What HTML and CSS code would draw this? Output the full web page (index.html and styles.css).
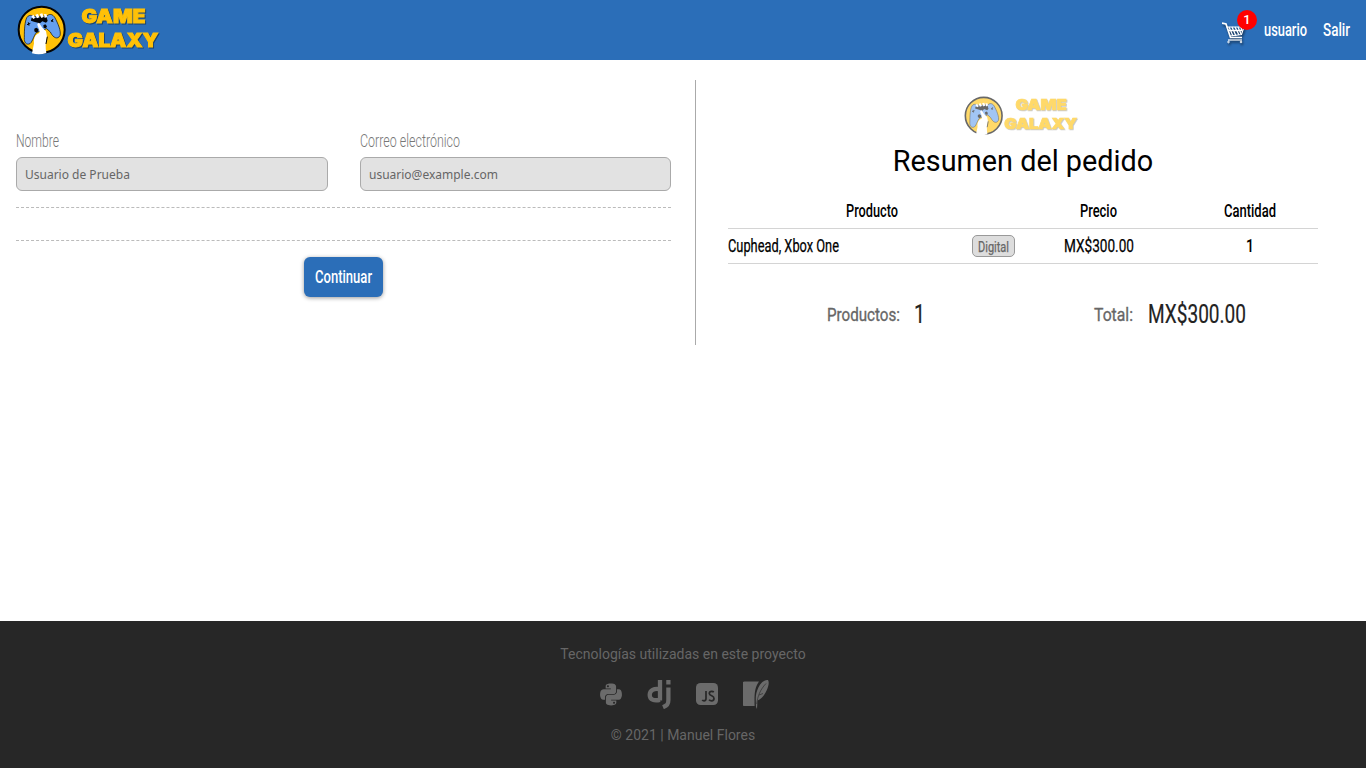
FILE: index.html
```html
<!DOCTYPE html>
<html lang="es">
<head>
<meta charset="utf-8">
<title>Game Galaxy</title>
<link rel="stylesheet" href="styles.css">
</head>
<body>
<svg class="defs">
  <symbol id="logo" viewBox="17 5 144 50" overflow="visible">
    <g transform="translate(12 2) scale(.33333)">
      <circle cx="89" cy="83" r="69" fill="#ffc107" stroke="#050505" stroke-width="6"/>
      <path d="M45 46C54 34 64 44 74 44L106 41C114 34 123 38 128 46C138 64 148 88 144 101C137 113 124 109 115 90L104 80L78 90C67 91 63 119 54 125C42 130 36 121 37 107C37 84 38 58 45 46Z" fill="#659fee" stroke="#050505" stroke-width="2"/>
      <path d="M58 49L103 43L107 57L102 62L91 58L84 64L66 59L57 56Z" fill="#050505"/>
      <path d="M58 42l7-4 4 10-5 3zM70 38l8-2 4 10-7 3zM83 36l8-2 4 11-7 3zM96 36l8 1 1 8-7 3z" fill="#fff"/>
      <path d="M60 154L66 124C64 108 70 98 82 93C85 83 76 75 76 66L81 62L91 77L102 88L105 104C100 121 100 137 103 153Q82 160 60 154Z" fill="#fff"/>
      <path d="M67 80l6-3 6 4v7l-6 4-6-4zM94 70l6-3 5 6-3 6-7-1z" fill="#050505"/>
      <path d="M45 68l10-4M49 61l2 10M117 55l7 4M123 51l-4 9M106 104l-4 22" fill="none" stroke="#050505" stroke-width="3"/>
    </g>
    <g class="brand">
      <text x="81.5" y="23" textLength="64" lengthAdjust="spacingAndGlyphs">GAME</text>
      <text x="67.5" y="46.500" textLength="91" lengthAdjust="spacingAndGlyphs">GALAXY</text>
    </g>
  </symbol>
</svg>

<header class="navbar">
  <svg class="logo"><use href="#logo"/></svg>
  <nav class="nav">
    <span class="cart">
      <svg width="24" height="24" viewBox="0 0 24 24" fill="none" stroke="#fff">
        <path d="M0 2L4 3L8.500 16.500H20" stroke-width="1.700"/>
        <path d="M4.500 6H22L19.500 13.500L8 15" stroke-width="1.100"/>
        <path d="M7 6l4 9M10 6l4 9M13 6l4 8M16 6l3 7M19 6l1 4M6 9.500H20" stroke-width="1.300"/>
        <path d="M6 19H20" stroke-width="1.200"/>
        <circle cx="6.500" cy="21" r=".8"/><circle cx="19" cy="21" r=".8"/>
      </svg>
      <b class="badge">1</b>
    </span>
    <svg class="t medium white" width="43"><text y="18" textLength="43" lengthAdjust="spacingAndGlyphs">usuario</text></svg>
    <svg class="t medium white" width="27"><text y="18" textLength="27" lengthAdjust="spacingAndGlyphs">Salir</text></svg>
  </nav>
</header>

<main class="checkout">
  <form class="details">
    <div class="fields">
      <label class="field">
        <svg class="t light" width="43"><text y="17.500" textLength="43" lengthAdjust="spacingAndGlyphs">Nombre</text></svg>
        <input class="input" value="Usuario de Prueba" disabled>
      </label>
      <label class="field">
        <svg class="t light" width="100"><text y="17.500" textLength="100" lengthAdjust="spacingAndGlyphs">Correo electrónico</text></svg>
        <input class="input" value="usuario@example.com" disabled>
      </label>
    </div>
    <div class="rules"></div>
    <button class="submit" type="button">
      <svg class="t medium white" width="57"><text y="18" textLength="57" lengthAdjust="spacingAndGlyphs">Continuar</text></svg>
    </button>
  </form>

  <section class="summary">
    <svg class="logo-small"><use href="#logo"/></svg>
    <h1 class="title">Resumen del pedido</h1>
    <div class="row head">
      <div class="center"><svg class="t medium" width="52"><text y="18" textLength="52" lengthAdjust="spacingAndGlyphs">Producto</text></svg></div>
      <div class="center"><svg class="t medium" width="37"><text y="18" textLength="37" lengthAdjust="spacingAndGlyphs">Precio</text></svg></div>
      <div class="center"><svg class="t medium" width="52"><text y="18" textLength="52" lengthAdjust="spacingAndGlyphs">Cantidad</text></svg></div>
    </div>
    <div class="row">
      <div class="product">
        <svg class="t regular" width="111"><text y="18" textLength="111" lengthAdjust="spacingAndGlyphs">Cuphead, Xbox One</text></svg>
        <span class="tag"><svg class="t small" width="31"><text y="15.500" textLength="31" lengthAdjust="spacingAndGlyphs">Digital</text></svg></span>
      </div>
      <div class="center"><svg class="t regular" width="70"><text y="18" textLength="70" lengthAdjust="spacingAndGlyphs">MX$300.00</text></svg></div>
      <div class="center"><svg class="t medium" width="6"><text x="-1" y="18" textLength="8" lengthAdjust="spacingAndGlyphs">1</text></svg></div>
    </div>
    <div class="totals">
      <div class="total">
        <svg class="t caption" width="73"><text y="19" textLength="73" lengthAdjust="spacingAndGlyphs">Productos:</text></svg>
        <svg class="t amount" width="8"><text x="-1" y="21" textLength="11" lengthAdjust="spacingAndGlyphs">1</text></svg>
      </div>
      <div class="total">
        <svg class="t caption" width="39"><text y="19" textLength="39" lengthAdjust="spacingAndGlyphs">Total:</text></svg>
        <svg class="t amount" width="98"><text y="21" textLength="98" lengthAdjust="spacingAndGlyphs">MX$300.00</text></svg>
      </div>
    </div>
  </section>
</main>

<footer class="footer">
  <p class="note">Tecnologías utilizadas en este proyecto</p>
  <div class="techs">
    <svg width="22" height="25" viewBox="0 0 448 512"><path d="M439.800 200.500c-7.700-30.900-22.300-54.200-53.400-54.200h-40.100v47.400c0 36.800-31.200 67.800-66.800 67.800H172.700c-29.200 0-53.400 25-53.400 54.300v101.800c0 29 25.200 46 53.400 54.300 33.800 9.900 66.300 11.700 106.800 0 26.900-7.800 53.400-23.500 53.400-54.300v-40.700H226.200v-13.600h160.200c31.100 0 42.600-21.700 53.400-54.200 11.200-33.500 10.700-65.700 0-108.600zM286.200 404c11.100 0 20.100 9.100 20.100 20.300 0 11.300-9 20.400-20.100 20.400-11 0-20.100-9.200-20.100-20.400.1-11.300 9.100-20.300 20.100-20.300zM167.800 248.100h106.800c29.700 0 53.400-24.500 53.400-54.300V91.900c0-29-24.400-50.700-53.400-55.600-35.800-5.900-74.700-5.600-106.800.1-45.200 8-53.400 24.700-53.400 55.600v40.700h106.900v13.600h-147c-31.100 0-58.300 18.700-66.800 54.200-9.800 40.700-10.200 66.100 0 108.600 7.600 31.600 25.700 54.200 56.800 54.200H101v-48.800c0-35.300 30.500-66.400 66.800-66.400zm-6.700-142.600c-11.100 0-20.100-9.100-20.100-20.300.1-11.300 9-20.400 20.100-20.400 11 0 20.100 9.200 20.100 20.400s-9 20.300-20.100 20.300z"/></svg>
    <svg width="24" height="30" viewBox="-.5 -1 24 30" fill="none">
      <path d="M12.500 0V20.500M12.500 9.300C6.500 8 2.200 10.500 2.200 15C2.200 20 7 21 12.500 19.800" stroke-width="4.300"/>
      <path d="M20.900 7.500V20C20.900 24.500 19.500 25.500 15.500 27.200M20.900 0V4.500" stroke-width="4.300"/>
    </svg>
    <svg width="22" height="22" viewBox="0 0 22 22"><rect width="22" height="22" rx="4.500"/><path d="M10 8V15.500Q10 17.800 8 17.800Q6.800 17.800 6.200 17M17.800 9Q17 8.300 15.800 8.300Q13.300 8.300 13.300 10.500Q13.300 12 15.700 12.800Q18 13.700 18 15.500Q18 17.800 15.700 17.800Q13.900 17.800 13 16.800" class="cut" stroke-width="1.700"/></svg>
    <svg width="27" height="30" viewBox="1 -1 27 30"><path d="M2.500 1.500H17C12.500 7.500 12.300 15 12.600 26H2.500Q.5 26 .5 24V3.500Q.5 1.500 2.500 1.500Z"/><path d="M26 0C22-1 17 4.500 15 11C13.300 16 13.800 19.500 14 27L15 29L15.500 20.500C22 19 29 4 26 0Z"/><path d="M24 3.500C18 10 15.700 16 14.700 24M17 15l4-1.500" class="cut" stroke-width=".6"/></svg>
  </div>
  <p class="note">© 2021 | Manuel Flores</p>
</footer>
</body>
</html>
```

FILE: styles.css
```css
* { box-sizing: border-box; }
body {
  margin: 0;
  min-height: 768px;
  display: flex;
  flex-direction: column;
  background: #fff;
  font-family: Roboto, sans-serif;
}
svg { display: block; flex: none; }
.defs { position: absolute; width: 0; height: 0; }

.brand {
  font: 900 18.5px Inter, sans-serif;
  fill: #ffc107;
  stroke: #ffc107;
  stroke-width: .9px;
  filter: drop-shadow(1px 1px .5px rgba(0, 0, 0, .4));
}

/* Condensed lettering */
.t { height: 24px; overflow: visible; font: 400 18px Roboto, sans-serif; fill: #000; }
.medium { font-weight: 500; }
.regular { stroke: #000; stroke-width: .25px; }
.white { fill: #fff; }
.light { font-weight: 300; fill: #777; }
.small { height: 20px; font-size: 14.5px; fill: #666; stroke: #666; stroke-width: .25px; }
.caption { font-size: 19px; fill: #666; stroke: #666; stroke-width: .35px; }
.amount { font-size: 26px; fill: #222; stroke: #222; stroke-width: .2px; }

.navbar {
  height: 60px;
  padding: 0 16px 0 17px;
  display: flex;
  align-items: center;
  justify-content: space-between;
  background: #2b6eb8;
}
.logo { width: 144px; height: 50px; overflow: visible; }
.nav { display: flex; align-items: center; gap: 16px; }
.cart { position: relative; margin: 6px 2px 0 0; }
.cart svg { filter: drop-shadow(1px 2px 1px rgba(0, 0, 0, .6)); }
.badge {
  position: absolute;
  top: -11px;
  left: 15px;
  width: 20px;
  height: 20px;
  border-radius: 50%;
  background: #f00;
  color: #fff;
  font: 500 13px/20px Roboto, sans-serif;
  text-align: center;
}

.checkout { flex: 1; display: flex; align-items: flex-start; padding-top: 20px; }
.details { width: 696px; height: 265px; padding: 49px 24px 0 16px; border-right: 1px solid #aaa; }
.fields { display: grid; grid-template-columns: 312px 311px; column-gap: 32px; }
.field { display: grid; gap: 4px; }
.input {
  width: 100%;
  height: 34px;
  padding: 0 8px;
  border: 1px solid #aaa;
  border-radius: 6px;
  background: #e2e2e2;
  color: #666;
  font: 12px "Noto Sans", sans-serif;
}
.rules { height: 34px; margin-top: 16px; border: dashed #bbb; border-width: 1px 0; }
.submit {
  display: flex;
  align-items: center;
  justify-content: center;
  width: 79px;
  height: 40px;
  margin: 16px auto 0;
  padding: 0;
  border: 0;
  border-radius: 6px;
  background: #2b6eb8;
  box-shadow: 0 1px 4px rgba(0, 0, 0, .4);
}

.summary { width: 590px; margin-left: 32px; padding-top: 16px; }
.logo-small { width: 115px; height: 40px; margin: 0 auto 0 236px; opacity: .6; overflow: visible; }
.title { margin: 7px 0 15px; font-size: 28.8px; line-height: 36px; font-weight: 400; text-align: center; }
.row {
  height: 35px;
  display: grid;
  grid-template-columns: 287px 167px 136px;
  align-items: center;
  border-bottom: 1px solid #d4d4d4;
}
.center { display: flex; justify-content: center; }
.product { display: flex; align-items: center; justify-content: space-between; }
.tag {
  width: 43px;
  height: 22px;
  display: flex;
  align-items: center;
  justify-content: center;
  border: 1px solid #999;
  border-radius: 5px;
  background: #ddd;
}
.totals { display: flex; justify-content: space-between; padding: 38px 72px 0 99px; }
.total { display: flex; gap: 15px; }

.footer {
  height: 147px;
  padding-top: 24px;
  background: #272727;
  color: #666;
  text-align: center;
}
.note { margin: 0; font-size: 14px; line-height: 18px; }
.techs { display: flex; justify-content: center; align-items: center; gap: 25px; height: 30px; margin: 16px 0 17px; padding-left: 3px; }
.techs svg { fill: #6b6b6b; stroke: none; }
.techs svg[fill="none"] { fill: none; stroke: #6b6b6b; }
.techs .cut { fill: none; stroke: #272727; }
```
